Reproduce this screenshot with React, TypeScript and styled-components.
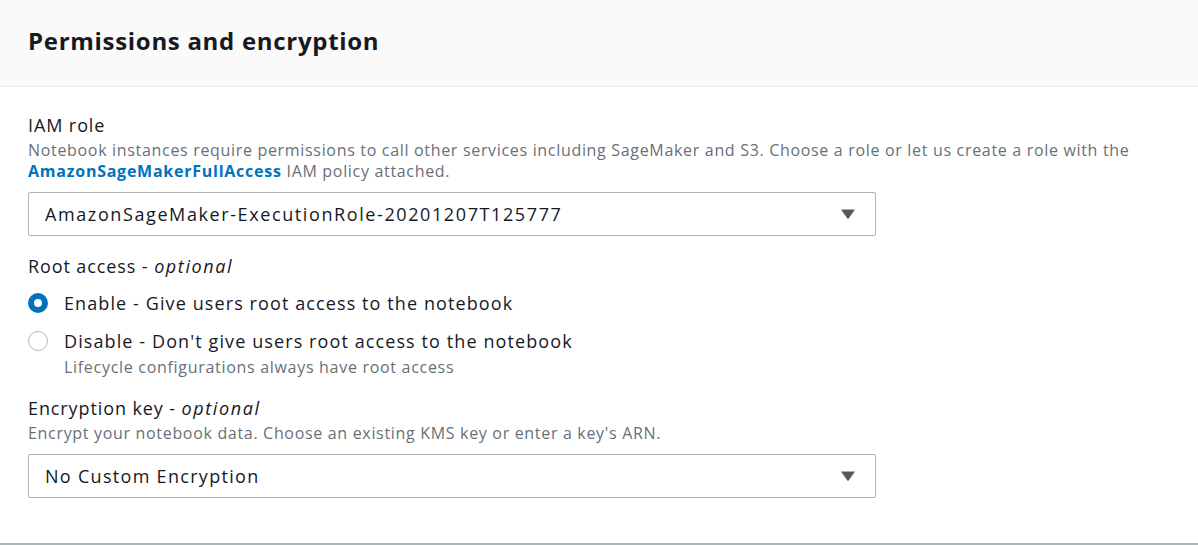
import React from "react";
import styled, { createGlobalStyle } from "styled-components";

const Global = createGlobalStyle`
  html, body { margin: 0; padding: 0; background: #ffffff; }
  body { font-family: "Open Sans", "Noto Sans", Arial, sans-serif; color: #16191f; }
  * { box-sizing: border-box; }
`;

const Card = styled.section`
  width: 1198px;
  height: 545px;
  background: #ffffff;
  border-bottom: 2px solid #aab7b8;
  display: flex;
  flex-direction: column;
`;

const Header = styled.header`
  height: 87px;
  background: #fafafa;
  border-bottom: 1px solid #eaeded;
  padding: 0 28px 4px;
  display: flex;
  align-items: center;
`;

const Title = styled.h2`
  margin: 0;
  font-size: 24px;
  line-height: 30px;
  font-weight: 700;
  color: #16191f;
  letter-spacing: 0.7px;
`;

const Body = styled.div`
  padding: 25px 28px 0;
  display: flex;
  flex-direction: column;
`;

const Field = styled.div<{ $gap?: number }>`
  display: flex;
  flex-direction: column;
  margin-bottom: ${(p) => p.$gap ?? 0}px;
`;

const Label = styled.div`
  font-size: 18px;
  line-height: 26px;
  letter-spacing: 0.9px;
  color: #16191f;
  em { font-style: italic; letter-spacing: 1.6px; }
`;

const Description = styled.div`
  margin-top: 2px;
  font-size: 16px;
  line-height: 21px;
  letter-spacing: 0.68px;
  color: #687078;
  width: 1120px;
  a { color: #0073bb; font-weight: 700; text-decoration: none; letter-spacing: 0.75px; }
`;

const SelectBox = styled.div<{ $top?: number; $spacing?: number }>`
  margin-top: ${(p) => p.$top ?? 0}px;
  width: 848px;
  height: 44px;
  border: 1px solid #aab7b8;
  border-radius: 2px;
  display: flex;
  align-items: center;
  justify-content: space-between;
  padding: 0 19px 0 16px;
  font-size: 18px;
  letter-spacing: ${(p) => p.$spacing ?? 1.4}px;
  color: #16191f;
`;

const Caret = styled.svg`
  width: 16px;
  height: 12px;
  fill: #545b64;
`;

const RadioGroup = styled.div`
  display: flex;
  flex-direction: column;
  margin-top: 11px;
`;

const RadioRow = styled.label<{ $top?: number }>`
  display: flex;
  align-items: flex-start;
  gap: 16px;
  margin-top: ${(p) => p.$top ?? 0}px;
`;

const RadioCircle = styled.span<{ $checked?: boolean }>`
  flex: none;
  width: 20px;
  height: 20px;
  margin-top: 3px;
  border-radius: 50%;
  background: #ffffff;
  border: ${(p) => (p.$checked ? "6px solid #0073bb" : "1.5px solid #aab7b8")};
`;

const RadioText = styled.div`
  display: flex;
  flex-direction: column;
`;

const RadioLabel = styled.div`
  font-size: 18px;
  line-height: 26px;
  letter-spacing: 1.1px;
  color: #16191f;
`;

const RadioDesc = styled.div`
  margin-top: 2px;
  font-size: 16px;
  line-height: 22px;
  letter-spacing: 0.7px;
  color: #687078;
`;

const CaretIcon = () => (
  <Caret viewBox="0 0 16 12">
    <path d="M1 1.5 L15 1.5 L8.6 10.6 Q8 11.4 7.4 10.6 Z" />
  </Caret>
);

export default function App() {
  return (
    <>
      <Global />
      <Card>
        <Header>
          <Title>Permissions and encryption</Title>
        </Header>
        <Body>
          <Field $gap={17}>
            <Label>IAM role</Label>
            <Description>
              Notebook instances require permissions to call other services including SageMaker and S3. Choose a role or let us create a role with the{" "}
              <a href="#">AmazonSageMakerFullAccess</a> IAM policy attached.
            </Description>
            <SelectBox $top={10} $spacing={1.6}>
              <span>AmazonSageMaker-ExecutionRole-20201207T125777</span>
              <CaretIcon />
            </SelectBox>
          </Field>
          <Field $gap={17}>
            <Label>
              Root access - <em>optional</em>
            </Label>
            <RadioGroup>
              <RadioRow>
                <RadioCircle $checked />
                <RadioText>
                  <RadioLabel>Enable - Give users root access to the notebook</RadioLabel>
                </RadioText>
              </RadioRow>
              <RadioRow $top={12}>
                <RadioCircle />
                <RadioText>
                  <RadioLabel>Disable - Don't give users root access to the notebook</RadioLabel>
                  <RadioDesc>Lifecycle configurations always have root access</RadioDesc>
                </RadioText>
              </RadioRow>
            </RadioGroup>
          </Field>
          <Field>
            <Label>
              Encryption key - <em>optional</em>
            </Label>
            <Description>Encrypt your notebook data. Choose an existing KMS key or enter a key's ARN.</Description>
            <SelectBox $top={10} $spacing={1.3}>
              <span>No Custom Encryption</span>
              <CaretIcon />
            </SelectBox>
          </Field>
        </Body>
      </Card>
    </>
  );
}
